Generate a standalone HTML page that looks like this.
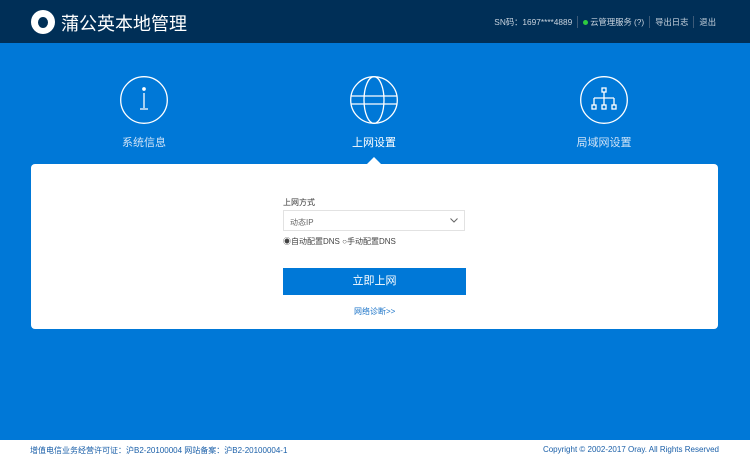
<!DOCTYPE html>
<html><head><meta charset="utf-8"><style>
*{margin:0;padding:0;box-sizing:border-box}
body{width:750px;height:458px;overflow:hidden;background:#0078d7;font-family:"Liberation Sans","Noto Sans CJK SC",sans-serif;position:relative}
.hd{position:absolute;left:0;top:0;width:750px;height:43px;background:#002f57}
.logo{position:absolute;left:31px;top:10px;width:24px;height:24px;border-radius:50%;background:#fff}
.logo:after{content:"";position:absolute;left:7px;top:7px;width:10px;height:11px;border-radius:50%;background:#002f57}
.title{position:absolute;left:61px;top:10px;color:#fff;font-size:18px}
.nav{position:absolute;right:29px;top:16px;color:#c8d3de;font-size:8.3px;display:flex;align-items:center}
.nav span{padding:0 5px;border-left:1px solid #3c5a78;line-height:12px}
.nav span:first-child{border:none}
.dot{display:inline-block;width:5px;height:5px;border-radius:50%;background:#2ecc40;margin-right:2px}
.ic{position:absolute;top:76px;width:48px;height:48px}
.lb{position:absolute;top:134px;width:100px;text-align:center;color:#cfe3f7;font-size:11px}
.card{position:absolute;left:31px;top:164px;width:687px;height:165px;background:#fff;border-radius:4px}
.tri{position:absolute;left:367px;top:157px;border:7px solid transparent;border-bottom-color:#fff;border-top:0}
.sel{position:absolute;left:283px;top:210px;width:182px;height:21px;border:1px solid #e2e2e2;font-size:8px;color:#666;padding:6px 0 0 6px}
.btn{position:absolute;left:283px;top:268px;width:183px;height:27px;background:#0078d7;color:#fff;font-size:11px;text-align:center;line-height:27px}
.ft{position:absolute;left:0;top:440px;width:750px;height:18px;background:#fff;font-size:8px;color:#1a5fa8}
</style></head><body>
<div class="hd"><div class="logo"></div><div class="title">蒲公英本地管理</div>
<div class="nav"><span>SN码：1697****4889</span><span><i class="dot"></i>云管理服务 (?)</span><span>导出日志</span><span>退出</span></div></div>
<svg class="ic" style="left:120px" viewBox="0 0 48 48" fill="none" stroke="#fff" stroke-width="1.3"><circle cx="24" cy="24" r="23.3"/><circle cx="24" cy="13" r="1.2" fill="#fff"/><path d="M24 17v15M20 33h8"/></svg>
<svg class="ic" style="left:350px" viewBox="0 0 48 48" fill="none" stroke="#fff" stroke-width="1.3"><circle cx="24" cy="24" r="23.3"/><ellipse cx="24" cy="24" rx="10" ry="23.3"/><path d="M1 20h46M1 28h46"/></svg>
<svg class="ic" style="left:580px" viewBox="0 0 48 48" fill="none" stroke="#fff" stroke-width="1.3"><circle cx="24" cy="24" r="23.3"/><rect x="22" y="12" width="4" height="4"/><path d="M24 16v13M14 22h20M14 22v7M34 22v7"/><rect x="12" y="29" width="4" height="4"/><rect x="22" y="29" width="4" height="4"/><rect x="32" y="29" width="4" height="4"/></svg>
<div class="lb" style="left:94px">系统信息</div>
<div class="lb" style="left:324px;color:#fff">上网设置</div>
<div class="lb" style="left:554px">局域网设置</div>
<div class="tri"></div>
<div class="card"></div>
<div style="position:absolute;left:283px;top:197px;font-size:8px;color:#333">上网方式</div>
<div class="sel">动态IP<svg style="position:absolute;right:6px;top:7px" width="8" height="5" viewBox="0 0 8 5" fill="none" stroke="#666"><path d="M.5.5L4 4 7.5.5"/></svg></div>
<div style="position:absolute;left:283px;top:236px;font-size:8px;color:#444">◉自动配置DNS ○手动配置DNS</div>
<div class="btn">立即上网</div>
<div style="position:absolute;left:354px;top:306px;font-size:8px;color:#1a73c8">网络诊断&gt;&gt;</div>
<div class="ft"><span style="position:absolute;left:30px;top:5px">增值电信业务经营许可证：沪B2-20100004 网站备案：沪B2-20100004-1</span><span style="position:absolute;right:31px;top:5px">Copyright © 2002-2017 Oray. All Rights Reserved</span></div>
</body></html>
